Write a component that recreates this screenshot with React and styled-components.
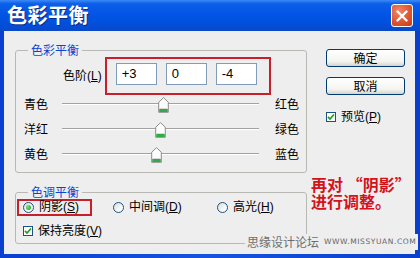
import styled, { createGlobalStyle } from "styled-components";

const GlobalStyle = createGlobalStyle`
  html, body {
    margin: 0;
    padding: 0;
    background: #ffffff;
  }
  * {
    box-sizing: border-box;
  }
`;

const sliders = [
  { left: "青色", right: "红色", value: 3 },
  { left: "洋红", right: "绿色", value: 0 },
  { left: "黄色", right: "蓝色", value: -4 },
];

const levels = ["+3", "0", "-4"];

const Thumb = () => (
  <svg width="11" height="16" viewBox="0 0 11 16">
    <path d="M5.5 0.7 L10.3 5.2 L10.3 15.3 L0.7 15.3 L0.7 5.2 Z" fill="#fdfdfd" stroke="#8c8c8c" strokeWidth="1" />
    <rect x="1.2" y="12" width="8.6" height="3" fill="#35a84a" />
    <line x1="1.5" y1="11.5" x2="9.5" y2="11.5" stroke="#d8d8d8" />
  </svg>
);

const CheckMark = () => (
  <svg width="8" height="8" viewBox="0 0 8 8">
    <path d="M1 3.8 L3 6 L7 1.5" fill="none" stroke="#21a121" strokeWidth="1.8" />
  </svg>
);

const Slider = ({ value }) => {
  const pct = ((value + 100) / 200) * 100;
  return (
    <Track>
      <TrackLine />
      <ThumbWrap style={{ left: `calc(${pct}% - 5.5px)` }}>
        <Thumb />
      </ThumbWrap>
    </Track>
  );
};

const Radio = ({ checked, children }) => (
  <RadioLabel>
    <RadioCircle>{checked && <RadioDot />}</RadioCircle>
    <span>{children}</span>
  </RadioLabel>
);

const Check = ({ children }) => (
  <CheckLabel>
    <CheckBox>
      <CheckMark />
    </CheckBox>
    <span>{children}</span>
  </CheckLabel>
);

const App = () => {
  return (
    <>
      <GlobalStyle />
      <Window lang="zh-CN">
        <TitleBar>
          <Title>色彩平衡</Title>
          <CloseButton>
            <svg width="12" height="12" viewBox="0 0 12 12">
              <path d="M1.5 1.5 L10.5 10.5 M10.5 1.5 L1.5 10.5" stroke="#fff" strokeWidth="2.4" strokeLinecap="round" />
            </svg>
          </CloseButton>
        </TitleBar>
        <Body>
          <LeftColumn>
            <Group $pad="0 0 5px 8px">
              <Legend $ml={4}>色彩平衡</Legend>
              <LevelsRow>
                <span>
                  色阶(<U>L</U>)
                </span>
                <RedBox $pad="4px 12px 8px 9px">
                  {levels.map((v) => (
                    <NumInput key={v}>{v}</NumInput>
                  ))}
                </RedBox>
              </LevelsRow>
              <SliderList>
                {sliders.map((s) => (
                  <SliderRow key={s.left}>
                    <span>{s.left}</span>
                    <Slider value={s.value} />
                    <RightLabel>{s.right}</RightLabel>
                  </SliderRow>
                ))}
              </SliderList>
            </Group>
            <Group $pad="0 8px 5px 1px">
              <Legend $ml={11}>色调平衡</Legend>
              <RadioRow>
                <RedBox $pad="0 2px 0 4px" $w={75} $h={17}>
                  <Radio checked>
                    阴影(<U>S</U>)
                  </Radio>
                </RedBox>
                <Radio>
                  中间调(<U>D</U>)
                </Radio>
                <Radio>
                  高光(<U>H</U>)
                </Radio>
              </RadioRow>
              <CheckRow>
                <Check>
                  保持亮度(<U>V</U>)
                </Check>
              </CheckRow>
            </Group>
          </LeftColumn>
          <RightColumn>
            <Button>确定</Button>
            <Button>取消</Button>
            <PreviewRow>
              <Check>
                预览(<U>P</U>)
              </Check>
            </PreviewRow>
          </RightColumn>
        </Body>
        <Note>
          再对 “阴影”
          <br />
          进行调整。
        </Note>
        <Watermark>
          <span>思缘设计论坛</span>
          <Url>WWW.MISSYUAN.COM</Url>
        </Watermark>
      </Window>
    </>
  );
};

export default App;

const Window = styled.div`
  position: relative;
  width: 420px;
  height: 258px;
  display: flex;
  flex-direction: column;
  background: linear-gradient(90deg, #0a3fd0 0%, #1554e0 50%, #0a3fcc 100%);
  font-family: "Liberation Sans", "Noto Sans CJK SC", sans-serif;
  font-size: 12px;
  color: #000;
`;

const TitleBar = styled.div`
  height: 31px;
  flex: none;
  display: flex;
  align-items: center;
  justify-content: space-between;
  padding: 0 7px 2px 7px;
  background: linear-gradient(
    180deg,
    #3d8af7 0%,
    #0b5fe8 12%,
    #0355e6 45%,
    #0150dc 75%,
    #0a48c8 100%
  );
`;

const Title = styled.div`
  font-family: "Noto Sans CJK SC", sans-serif;
  font-weight: 700;
  font-size: 20px;
  line-height: 22px;
  color: #ffffff;
  letter-spacing: 0.5px;
  text-shadow: 1px 1px 0 #0a2a8a;
`;

const CloseButton = styled.div`
  width: 22px;
  height: 23px;
  margin-top: 2px;
  border: 1px solid #ffffff;
  border-radius: 3px;
  display: flex;
  align-items: center;
  justify-content: center;
  background: radial-gradient(circle at 35% 30%, #f0876a 0%, #e0562f 55%, #c23c1c 100%);
`;

const Body = styled.div`
  flex: 1;
  margin: 0 5px 4px 4px;
  background: #eeeeee;
  display: grid;
  grid-template-columns: 292px 79px;
  column-gap: 19px;
  padding: 12px 0 0 11px;
  align-items: start;
`;

const LeftColumn = styled.div`
  display: flex;
  flex-direction: column;
  gap: 12px;
`;

const Group = styled.fieldset`
  margin: 0;
  padding: ${(p) => p.$pad};
  border: 1px solid #b9b9b4;
  border-radius: 3px;
  min-width: 0;
`;

const Legend = styled.legend`
  margin-left: ${(p) => p.$ml}px;
  padding: 0 3px;
  font-family: "Noto Sans CJK SC", sans-serif;
  font-size: 12px;
  line-height: 14px;
  color: #0a46d2;
`;

const U = styled.span`
  text-decoration: underline;
`;

const LevelsRow = styled.div`
  display: flex;
  align-items: center;
  gap: 3px;
  padding-left: 39px;
  line-height: 14px;
`;

const RedBox = styled.div`
  display: flex;
  align-items: center;
  gap: 9px;
  padding: ${(p) => p.$pad};
  border: 2px solid #c8202a;
  width: ${(p) => (p.$w ? `${p.$w}px` : "auto")};
  height: ${(p) => (p.$h ? `${p.$h}px` : "auto")};
`;

const NumInput = styled.div`
  width: 41px;
  height: 22px;
  border: 1px solid #7f9db9;
  background: #ffffff;
  padding-left: 5px;
  font-family: "Liberation Sans", sans-serif;
  font-size: 13px;
  line-height: 20px;
`;

const SliderList = styled.div`
  margin-top: -3px;
  display: flex;
  flex-direction: column;
`;

const SliderRow = styled.div`
  height: 25px;
  display: grid;
  grid-template-columns: 38px 197px auto;
  align-items: center;
  line-height: 14px;
  white-space: nowrap;
`;

const RightLabel = styled.span`
  margin-left: 16px;
`;

const Track = styled.div`
  position: relative;
  height: 16px;
`;

const TrackLine = styled.div`
  margin-top: 6px;
  height: 2px;
  border-top: 1px solid #a2a2a2;
  border-bottom: 1px solid #ffffff;
`;

const ThumbWrap = styled.div`
  position: absolute;
  top: 0;
  width: 11px;
  height: 16px;
  line-height: 0;
`;

const RadioRow = styled.div`
  display: grid;
  grid-template-columns: 96px 104px auto;
  align-items: center;
  line-height: 13px;
`;

const RadioLabel = styled.div`
  display: flex;
  align-items: center;
  gap: 5px;
  white-space: nowrap;
`;

const RadioCircle = styled.div`
  width: 11px;
  height: 11px;
  border-radius: 50%;
  border: 1px solid #1c5180;
  background: linear-gradient(135deg, #dcdcd5 0%, #ffffff 80%);
  display: flex;
  align-items: center;
  justify-content: center;
`;

const RadioDot = styled.div`
  width: 5px;
  height: 5px;
  border-radius: 50%;
  background: radial-gradient(circle at 35% 35%, #7be07b, #1e9a1e);
`;

const CheckRow = styled.div`
  margin-top: 8px;
  padding-left: 6px;
  line-height: 14px;
`;

const CheckLabel = styled.div`
  display: flex;
  align-items: center;
  gap: 5px;
  white-space: nowrap;
`;

const CheckBox = styled.div`
  width: 10px;
  height: 10px;
  border: 1px solid #1c5180;
  background: #ffffff;
  display: flex;
  align-items: center;
  justify-content: center;
`;

const RightColumn = styled.div`
  display: flex;
  flex-direction: column;
  gap: 10px;
  padding-top: 6px;
`;

const Button = styled.div`
  height: 18px;
  border: 1px solid #003c74;
  border-radius: 3px;
  background: linear-gradient(180deg, #ffffff 0%, #f4f4f0 70%, #d8d4cc 100%);
  display: flex;
  align-items: center;
  justify-content: center;
  font-family: "Noto Sans CJK SC", sans-serif;
  font-size: 12px;
  line-height: 14px;
`;

const PreviewRow = styled.div`
  margin-top: 5px;
  line-height: 14px;
`;

const Note = styled.div`
  position: absolute;
  left: 311px;
  top: 176px;
  font-family: "Noto Sans CJK SC", sans-serif;
  font-weight: 700;
  font-size: 16px;
  line-height: 17px;
  color: #d3121c;
  white-space: nowrap;
`;

const Watermark = styled.div`
  position: absolute;
  left: 245px;
  top: 234px;
  display: flex;
  align-items: center;
  gap: 5px;
  padding: 0 2px;
  background: #eeeeee;
  color: #6e6e6e;
  font-family: "Noto Sans CJK SC", sans-serif;
  font-size: 12px;
  line-height: 16px;
  white-space: nowrap;
`;

const Url = styled.span`
  font-family: "DejaVu Sans", sans-serif;
  font-size: 7.5px;
  letter-spacing: 0.6px;
  color: #666666;
`;
